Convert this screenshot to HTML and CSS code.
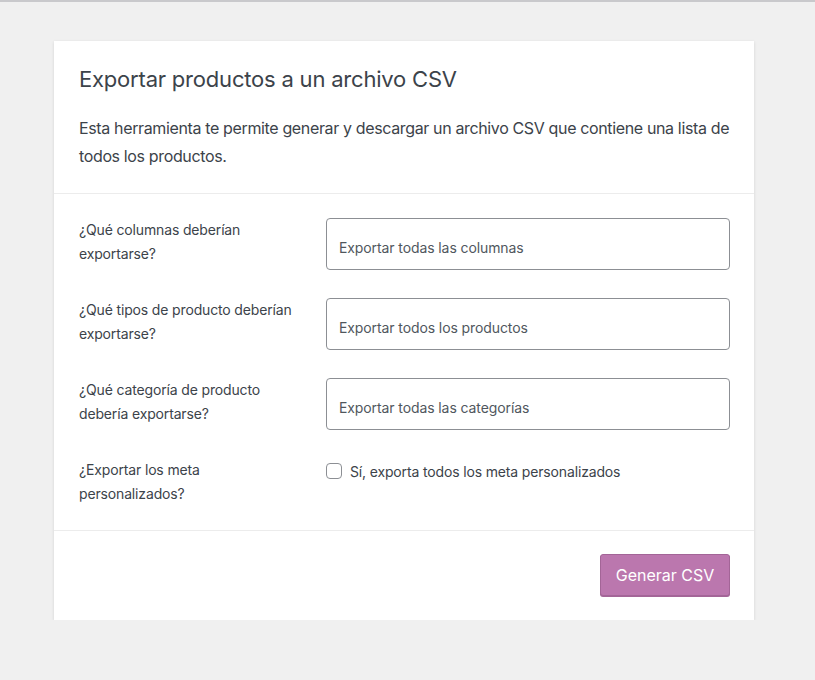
FILE: index.html
```html
<!DOCTYPE html>
<html lang="es">
<head>
<meta charset="utf-8">
<title>Exportar productos</title>
<link rel="stylesheet" href="styles.css">
</head>
<body>
<div class="topbar"></div>
<main class="page">
  <section class="card">
    <header class="card-header">
      <h2 class="title">Exportar productos a un archivo CSV</h2>
      <p class="desc">Esta herramienta te permite generar y descargar un archivo CSV que contiene una lista de todos los productos.</p>
    </header>
    <div class="card-body">
      <div class="row">
        <label class="label">¿Qué columnas deberían exportarse?</label>
        <div class="field"><div class="select">Exportar todas las columnas</div></div>
      </div>
      <div class="row">
        <label class="label">¿Qué tipos de producto deberían exportarse?</label>
        <div class="field"><div class="select">Exportar todos los productos</div></div>
      </div>
      <div class="row">
        <label class="label">¿Qué categoría de producto debería exportarse?</label>
        <div class="field"><div class="select">Exportar todas las categorías</div></div>
      </div>
      <div class="row">
        <label class="label">¿Exportar los meta personalizados?</label>
        <div class="field check-field">
          <span class="checkbox"></span>
          <span class="check-label">Sí, exporta todos los meta personalizados</span>
        </div>
      </div>
    </div>
    <footer class="card-footer">
      <button class="btn">Generar CSV</button>
    </footer>
  </section>
</main>
</body>
</html>
```
FILE: styles.css
```css
html, body {
  margin: 0;
  padding: 0;
  background: #f0f0f0;
  font-family: Inter, "Noto Sans", "Liberation Sans", sans-serif;
  color: #3c434a;
}
.topbar {
  height: 2px;
  background: #c9c9cc;
}
.page {
  padding: 39px 61px 0 54px;
}
.card {
  width: 700px;
  background: #fff;
  box-shadow: 0 1px 3px rgba(0, 0, 0, 0.12);
}
.card-header {
  padding: 24px 16px 23px 25px;
  border-bottom: 1px solid #ececec;
}
.title {
  margin: 0 0 21px;
  font-size: 22px;
  line-height: 28px;
  font-weight: 400;
  color: #3c434a;
  letter-spacing: -0.2px;
}
.desc {
  margin: 0;
  font-size: 16px;
  line-height: 28px;
  color: #3c434a;
  letter-spacing: -0.36px;
}
.card-body {
  padding: 24px 24px 24px 25px;
  display: flex;
  flex-direction: column;
  gap: 28px;
  border-bottom: 1px solid #ececec;
}
.row {
  display: flex;
  align-items: flex-start;
}
.label {
  width: 222px;
  flex: none;
  margin-right: 25px;
  font-size: 14px;
  line-height: 24px;
  color: #3c434a;
  letter-spacing: -0.15px;
}
.field {
  flex: 1;
}
.select {
  box-sizing: border-box;
  height: 52px;
  border: 1px solid #8c8f94;
  border-radius: 4px;
  padding: 6px 12px 0;
  display: flex;
  align-items: center;
  font-size: 14px;
  color: #50575e;
  letter-spacing: -0.1px;
}
.check-field {
  display: flex;
  align-items: center;
  gap: 8px;
  height: 26px;
}
.checkbox {
  box-sizing: border-box;
  width: 16px;
  height: 16px;
  border: 1px solid #8c8f94;
  border-radius: 4px;
  background: #fff;
  flex: none;
}
.check-label {
  font-size: 14px;
  color: #3c434a;
  letter-spacing: -0.15px;
}
.card-footer {
  padding: 23px 24px 24px;
  display: flex;
  justify-content: flex-end;
}
.btn {
  box-sizing: border-box;
  width: 130px;
  height: 42px;
  background: #bb77ae;
  border: 1px solid #a36597;
  border-radius: 3px;
  color: #fff;
  font-family: Inter, "Noto Sans", "Liberation Sans", sans-serif;
  font-size: 16px;
  padding: 0;
  box-shadow: 0 1px 0 #a36597;
}
```
